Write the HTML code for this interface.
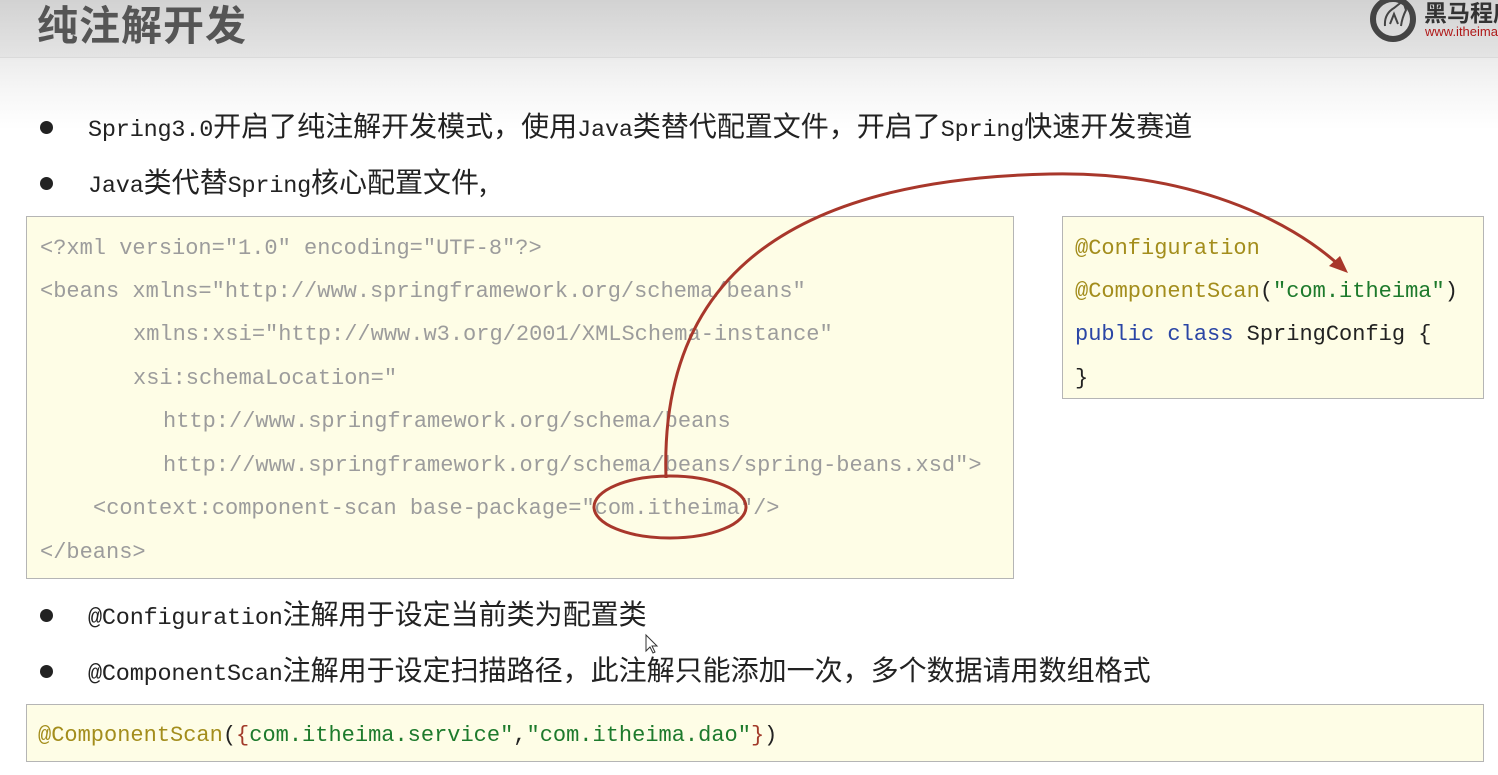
<!DOCTYPE html>
<html><head><meta charset="utf-8">
<style>
*{margin:0;padding:0;box-sizing:border-box}
body{width:1498px;height:775px;overflow:hidden;position:relative;background:linear-gradient(#ececec 58px,#f6f6f6 90px,#fff 130px);font-family:"Liberation Mono","Noto Sans CJK SC",monospace}
.hdr{position:absolute;left:0;top:0;width:1498px;height:58px;background:linear-gradient(#d2d2d2,#e4e4e4);border-bottom:1px solid #dadada}
.title{position:absolute;left:37px;top:-8px;font:bold 41px "Noto Sans CJK SC",sans-serif;color:#555;letter-spacing:1px}
.b{position:absolute;left:88px;font-size:23.5px;letter-spacing:-0.2px;color:#222;white-space:nowrap;line-height:30px}
.b i{font-style:normal;font-family:"Noto Sans CJK SC",sans-serif;font-size:28px;letter-spacing:0}
.dot{position:absolute;left:40px;width:13px;height:13px;border-radius:50%;background:#222}
.box{position:absolute;background:#fefde6;border:1.5px solid #b5b5b5}
.ln{position:absolute;font-size:22px;white-space:pre;line-height:30px}
.x{color:#9c9c9c}
.an{color:#a38d1c}.st{color:#1d7a2c}.kw{color:#2a45a5}.bk{color:#222}.rd{color:#a23a2a}
</style></head><body>
<div class="hdr"></div>
<div class="title">纯注解开发</div>
<svg style="position:absolute;left:1368px;top:-4px" width="130" height="50">
<circle cx="25" cy="23" r="20" fill="none" stroke="#444" stroke-width="6"/>
<path d="M17 30 Q16 18 26 12 L35 5 L38 14 Q34 22 33 30 M22 28 L26 18 L30 28" fill="none" stroke="#444" stroke-width="2"/>
<text x="56" y="25" font-family="Noto Sans CJK SC,sans-serif" font-weight="bold" font-size="23" fill="#333">黑马程序</text>
<text x="57" y="40" font-family="Liberation Sans,sans-serif" font-size="13" fill="#b01818">www.itheima</text>
</svg>

<div class="dot" style="top:121px"></div>
<div class="b" style="top:110px">Spring3.0<i>开启了纯注解开发模式，使用</i>Java<i>类替代配置文件，开启了</i>Spring<i>快速开发赛道</i></div>
<div class="dot" style="top:177px"></div>
<div class="b" style="top:166px">Java<i>类代替</i>Spring<i>核心配置文件,</i></div>

<div class="box" style="left:26px;top:216px;width:988px;height:363px"></div>
<div class="ln x" style="left:40px;top:234px">&lt;?xml version="1.0" encoding="UTF-8"?&gt;</div>
<div class="ln x" style="left:40px;top:277px">&lt;beans xmlns="http://www.springframework.org/schema/beans"</div>
<div class="ln x" style="left:133px;top:320px">xmlns:xsi="http://www.w3.org/2001/XMLSchema-instance"</div>
<div class="ln x" style="left:133px;top:364px">xsi:schemaLocation="</div>
<div class="ln x" style="left:163px;top:407px">http://www.springframework.org/schema/beans</div>
<div class="ln x" style="left:163px;top:451px">http://www.springframework.org/schema/beans/spring-beans.xsd"&gt;</div>
<div class="ln x" style="left:93px;top:494px">&lt;context:component-scan base-package="com.itheima"/&gt;</div>
<div class="ln x" style="left:40px;top:538px">&lt;/beans&gt;</div>

<div class="box" style="left:1062px;top:216px;width:422px;height:183px"></div>
<div class="ln an" style="left:1075px;top:234px">@Configuration</div>
<div class="ln" style="left:1075px;top:277px"><span class="an">@ComponentScan</span><span class="bk">(</span><span class="st">"com.itheima"</span><span class="bk">)</span></div>
<div class="ln" style="left:1075px;top:320px"><span class="kw">public class</span><span class="bk"> SpringConfig {</span></div>
<div class="ln bk" style="left:1075px;top:364px">}</div>

<div class="dot" style="top:609px"></div>
<div class="b" style="top:598px">@Configuration<i>注解用于设定当前类为配置类</i></div>
<div class="dot" style="top:665px"></div>
<div class="b" style="top:654px">@ComponentScan<i>注解用于设定扫描路径，此注解只能添加一次，多个数据请用数组格式</i></div>

<div class="box" style="left:26px;top:704px;width:1458px;height:58px"></div>
<div class="ln" style="left:38px;top:721px"><span class="an">@ComponentScan</span><span class="bk">(</span><span class="rd">{</span><span class="st">com.itheima.service"</span><span class="bk">,</span><span class="st">"com.itheima.dao"</span><span class="rd">}</span><span class="bk">)</span></div>

<svg style="position:absolute;left:0;top:0" width="1498" height="775">
<ellipse cx="670" cy="507" rx="76" ry="31" fill="none" stroke="#a8372b" stroke-width="3"/>
<path d="M666 478 C660 300 760 180 1050 174 C1190 171 1290 220 1340 266" fill="none" stroke="#a8372b" stroke-width="3"/>
<path d="M1348 273 L1329 266 L1340 256 Z" fill="#a8372b"/>
<path d="M646 635 L646 651 L650 647 L653 653 L655 652 L652 646 L657 646 Z" fill="#fff" stroke="#333" stroke-width="1"/>
</svg>
</body></html>
